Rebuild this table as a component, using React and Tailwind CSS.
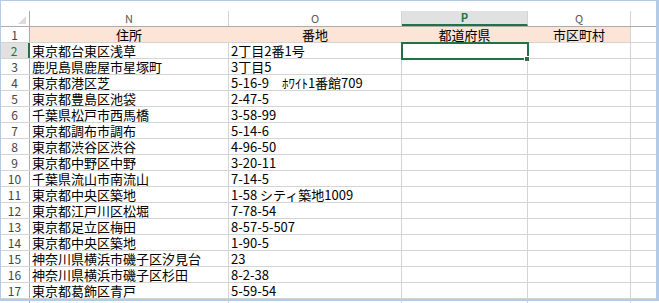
import React from 'react';

const rows = [
  ['東京都台東区浅草', '2丁目2番1号'],
  ['鹿児島県鹿屋市星塚町', '3丁目5'],
  ['東京都港区芝', '5-16-9　ﾎﾜｲﾄ1番館709'],
  ['東京都豊島区池袋', '2-47-5'],
  ['千葉県松戸市西馬橋', '3-58-99'],
  ['東京都調布市調布', '5-14-6'],
  ['東京都渋谷区渋谷', '4-96-50'],
  ['東京都中野区中野', '3-20-11'],
  ['千葉県流山市南流山', '7-14-5'],
  ['東京都中央区築地', '1-58 シティ築地1009'],
  ['東京都江戸川区松堀', '7-78-54'],
  ['東京都足立区梅田', '8-57-5-507'],
  ['東京都中央区築地', '1-90-5'],
  ['神奈川県横浜市磯子区汐見台', '23'],
  ['神奈川県横浜市磯子区杉田', '8-2-38'],
  ['東京都葛飾区青戸', '5-59-54'],
  ['', ''],
];

const jp = { fontFamily: '"Noto Sans CJK JP", "Noto Sans", sans-serif' };

function ColHeader({ w, label, active }) {
  return (
    <div
      className={`${w} h-full flex items-center justify-center border-r border-[#d4d4d4] text-[11px] ${
        active ? 'bg-[#e1e1e1] text-[#217346] font-bold border-b-2 border-b-[#217346]' : 'text-[#595959]'
      }`}
    >
      {label}
    </div>
  );
}

export default function App() {
  return (
    <div className="relative w-[659px] h-[303px] overflow-hidden bg-white text-black" style={jp}>
      {/* blank strip above the column letters */}
      <div className="h-[11px]" />

      {/* column letters */}
      <div className="flex h-[16px] border-b border-[#ababab]">
        <div className="w-[30px] h-full border-r border-[#ababab] flex items-end justify-end pr-[3px] pb-[2px]">
          <svg width="8" height="8" viewBox="0 0 8 8">
            <polygon points="8,0 8,8 0,8" fill="#dcdcdc" />
          </svg>
        </div>
        <ColHeader w="w-[199px]" label="N" />
        <ColHeader w="w-[173px]" label="O" />
        <ColHeader w="w-[126px]" label="P" active />
        <ColHeader w="w-[103px]" label="Q" />
        <div className="flex-1" />
      </div>

      {/* row 1 headings */}
      <div className="flex h-[16px] border-b border-[#d4d4d4] text-[13px] leading-none">
        <div className="w-[30px] h-full border-r border-[#ababab] flex items-center justify-center text-[12px] text-[#444]">1</div>
        <div className="w-[199px] h-full bg-[#fce4d6] border-r border-[#fce4d6] flex items-center justify-center">住所</div>
        <div className="w-[173px] h-full bg-[#fce4d6] border-r border-[#fce4d6] flex items-center justify-center">番地</div>
        <div className="w-[126px] h-full bg-[#fce4d6] border-r border-[#fce4d6] flex items-center justify-center">都道府県</div>
        <div className="w-[103px] h-full bg-[#fce4d6] border-r border-[#d4d4d4] flex items-center justify-center">市区町村</div>
        <div className="flex-1" />
      </div>

      {rows.map(([addr, num], i) => {
        const n = i + 2;
        const sel = n === 2;
        return (
          <div key={n} className="flex h-[16px] border-b border-[#d4d4d4] text-[13px] leading-none">
            <div
              className={`w-[30px] h-full flex items-center justify-center text-[12px] ${
                sel
                  ? 'bg-[#e1e1e1] text-[#217346] border-r-2 border-[#217346]'
                  : 'text-[#444] border-r border-[#ababab]'
              }`}
            >
              {n}
            </div>
            <div className="w-[199px] h-full border-r border-[#d4d4d4] flex items-center pl-[2px] whitespace-nowrap">{addr}</div>
            <div className="w-[173px] h-full border-r border-[#d4d4d4] flex items-center pl-[2px] whitespace-nowrap">{num}</div>
            <div className="w-[126px] h-full border-r border-[#d4d4d4]" />
            <div className="w-[103px] h-full border-r border-[#d4d4d4]" />
            <div className="flex-1" />
          </div>
        );
      })}

      {/* active cell P2 */}
      <div className="absolute left-[401px] top-[42px] w-[128px] h-[18px] border-2 border-[#217346] pointer-events-none" />
      <div className="absolute left-[524px] top-[56px] w-[6px] h-[6px] bg-[#217346] border border-white pointer-events-none" />

      {/* window frame */}
      <div className="absolute left-0 top-0 w-[659px] h-[301px] border-l border-t border-r-[3px] border-b-[2px] border-[#b3cbe6] pointer-events-none" />
    </div>
  );
}
